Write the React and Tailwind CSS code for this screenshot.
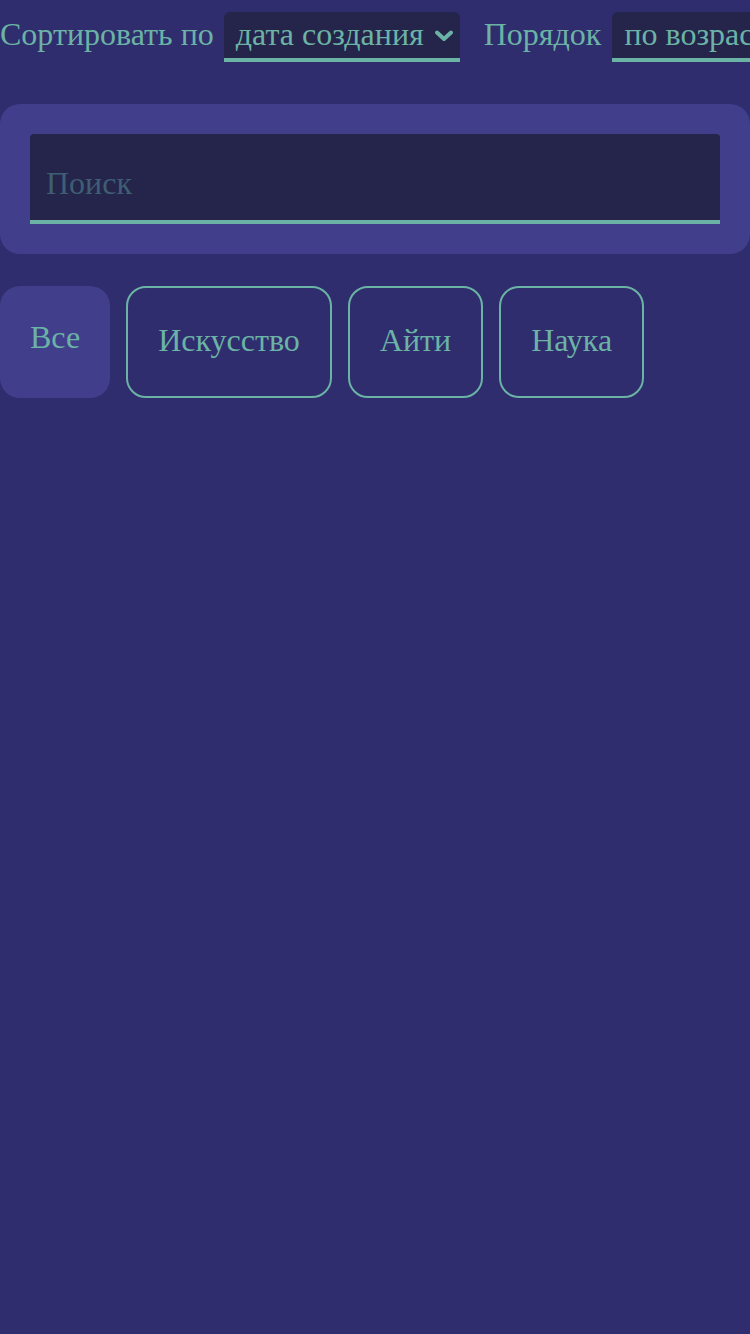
import React, { useState } from "react";

const categories = ["Все", "Искусство", "Айти", "Наука"];

function Chevron() {
  return (
    <svg width="20" height="14" viewBox="0 0 20 14" className="ml-[10px] mt-[4px] shrink-0">
      <path d="M3 3.5 L10 10 L17 3.5" fill="none" stroke="#6bb3a5" strokeWidth="4" strokeLinecap="round" strokeLinejoin="round" />
    </svg>
  );
}

function FakeSelect({ value, arrow }) {
  return (
    <div className="flex items-center h-[50px] shrink-0 bg-[#25244b] rounded-t-[6px] border-b-4 border-[#6bb3a5] pl-[12px] pr-[6px] pb-[2px] whitespace-nowrap">
      <span>{value}</span>
      {arrow && <Chevron />}
    </div>
  );
}

export default function App() {
  const [active, setActive] = useState("Все");
  return (
    <div className="min-h-[1334px] w-[750px] overflow-hidden bg-[#2f2d6e] text-[#6bb3a5] text-[32px] leading-none font-['Liberation_Serif',serif]">
      <div className="flex items-center pt-[12px] whitespace-nowrap">
        <span className="mr-[10px] mb-[6px]">Сортировать по</span>
        <FakeSelect value="дата создания" arrow />
        <span className="ml-[24px] mr-[11px] mb-[6px]">Порядок</span>
        <FakeSelect value="по возрастанию" arrow />
      </div>

      <div className="mt-[42px] bg-[#413f8c] rounded-[20px] p-[30px]">
        <div className="h-[90px] bg-[#25244b] rounded-t-[4px] border-b-4 border-[#6bb3a5] flex items-center pl-[16px] pt-[12px]">
          <span className="text-[#3e5f73]">Поиск</span>
        </div>
      </div>

      <div className="flex gap-[16px] mt-[32px]">
        {categories.map((c) =>
          c === active ? (
            <button
              key={c}
              onClick={() => setActive(c)}
              className="h-[112px] px-[30px] rounded-[20px] bg-[#413f8c] flex items-center pb-[10px]"
            >
              {c}
            </button>
          ) : (
            <button
              key={c}
              onClick={() => setActive(c)}
              className="h-[112px] px-[30px] rounded-[20px] border-2 border-[#6bb3a5] flex items-center pb-[4px]"
            >
              {c}
            </button>
          )
        )}
      </div>
    </div>
  );
}
